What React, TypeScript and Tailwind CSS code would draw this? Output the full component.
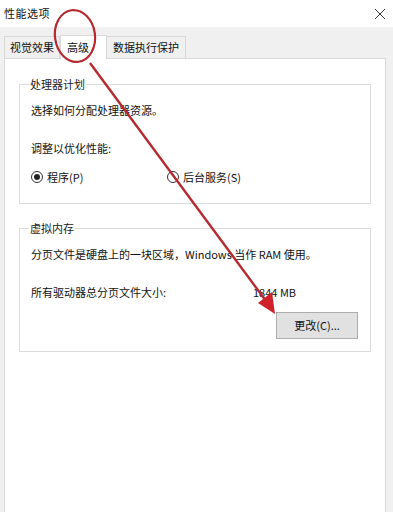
import { ReactNode } from 'react'

const font = { fontFamily: '"Noto Sans CJK SC", "Noto Sans", sans-serif' }

function GroupBox({ title, children, className }: { title: string; children: ReactNode; className?: string }) {
  return (
    <fieldset className={`border border-[#dcdcdc] mx-[14px] px-[11px] ${className ?? ''}`}>
      <legend className="px-[1px] ml-[-2px] text-[11px] leading-[14px] text-[#1a1a1a]">{title}</legend>
      {children}
    </fieldset>
  )
}

function Radio({ checked, label }: { checked?: boolean; label: string }) {
  return (
    <div className="flex items-center gap-[4px]">
      <span className="w-[12px] h-[12px] rounded-full border border-[#333] flex items-center justify-center bg-white">
        {checked && <span className="w-[6px] h-[6px] rounded-full bg-[#222]" />}
      </span>
      <span className="text-[11px] leading-[14px]">{label}</span>
    </div>
  )
}

export default function App() {
  return (
    <div className="relative w-[393px] h-[512px] overflow-hidden bg-[#f0f0f0] text-[#111]" style={font}>
      {/* title bar */}
      <div className="h-[27px] bg-white flex items-center justify-between pl-[4px] pr-[6px]">
        <span className="text-[11px] tracking-[0.5px]">性能选项</span>
        <svg width="12" height="12" viewBox="0 0 12 12" className="mr-[1px]">
          <path d="M1 1 L11 11 M11 1 L1 11" stroke="#333" strokeWidth="1" />
        </svg>
      </div>

      {/* tabs */}
      <div className="flex items-end pl-[4px] h-[31px]">
        <div className="h-[22px] px-[5px] border border-b-0 border-[#d9d9d9] bg-[#f0f0f0] flex items-center text-[11px]">
          视觉效果
        </div>
        <div className="h-[24px] px-[6px] w-[47px] border border-b-0 border-[#d9d9d9] bg-white flex items-center text-[11px] relative top-[1px] z-10">
          高级
        </div>
        <div className="h-[22px] px-[6px] border border-b-0 border-l-0 border-[#d9d9d9] bg-[#f0f0f0] flex items-center text-[11px]">
          数据执行保护
        </div>
      </div>

      {/* tab panel */}
      <div className="ml-[4px] mr-[7px] h-[460px] bg-white border border-[#d9d9d9] pt-[18px]">
        <GroupBox title="处理器计划" className="h-[127px]">
          <p className="text-[11px] leading-[14px] mt-[12px]">选择如何分配处理器资源。</p>
          <p className="text-[11px] leading-[14px] mt-[24px]">调整以优化性能:</p>
          <div className="flex mt-[15px]">
            <div className="w-[136px]">
              <Radio checked label="程序(P)" />
            </div>
            <Radio label="后台服务(S)" />
          </div>
        </GroupBox>

        <GroupBox title="虚拟内存" className="h-[131px] mt-[17px]">
          <p className="text-[11px] leading-[14px] mt-[12px]">分页文件是硬盘上的一块区域，Windows 当作 RAM 使用。</p>
          <div className="flex text-[11px] leading-[14px] mt-[24px]">
            <span className="w-[222px]">所有驱动器总分页文件大小:</span>
            <span>1844 MB</span>
          </div>
          <div className="flex justify-end mt-[13px] mr-[1px]">
            <button className="w-[82px] h-[27px] bg-[#e1e1e1] border border-[#adadad] text-[11px]">更改(C)...</button>
          </div>
        </GroupBox>
      </div>

      {/* red annotation */}
      <svg className="absolute left-0 top-0 z-20 pointer-events-none" width="393" height="512" viewBox="0 0 393 512">
        <ellipse cx="75" cy="36" rx="20" ry="26" transform="rotate(-8 75 36)" fill="none" stroke="#b52a2f" strokeWidth="2.2" />
        <line x1="90" y1="63" x2="266" y2="301" stroke="#b52a2f" strokeWidth="2.4" />
        <polygon points="275,314 258,303 272,292" fill="#d0212a" />
      </svg>
    </div>
  )
}
